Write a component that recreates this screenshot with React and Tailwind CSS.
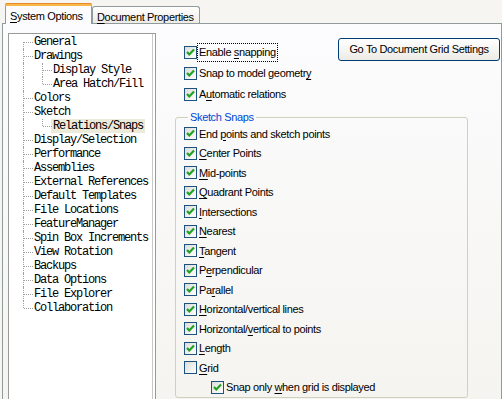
import React from 'react';

const treeItems = [
    { label: 'General', level: 0 },
    { label: 'Drawings', level: 0 },
    { label: 'Display Style', level: 1 },
    { label: 'Area Hatch/Fill', level: 1, lastChild: true },
    { label: 'Colors', level: 0 },
    { label: 'Sketch', level: 0 },
    { label: 'Relations/Snaps', level: 1, lastChild: true, selected: true },
    { label: 'Display/Selection', level: 0 },
    { label: 'Performance', level: 0 },
    { label: 'Assemblies', level: 0 },
    { label: 'External References', level: 0 },
    { label: 'Default Templates', level: 0 },
    { label: 'File Locations', level: 0 },
    { label: 'FeatureManager', level: 0 },
    { label: 'Spin Box Increments', level: 0 },
    { label: 'View Rotation', level: 0 },
    { label: 'Backups', level: 0 },
    { label: 'Data Options', level: 0 },
    { label: 'File Explorer', level: 0 },
    { label: 'Collaboration', level: 0 },
];

const snaps = [
    { label: 'End points and sketch points', u: 4, checked: true },
    { label: 'Center Points', u: 0, checked: true },
    { label: 'Mid-points', u: 0, checked: true },
    { label: 'Quadrant Points', u: 0, checked: true },
    { label: 'Intersections', u: 0, checked: true },
    { label: 'Nearest', u: 0, checked: true },
    { label: 'Tangent', u: 0, checked: true },
    { label: 'Perpendicular', u: 1, checked: true },
    { label: 'Parallel', u: 2, checked: true },
    { label: 'Horizontal/vertical lines', u: 0, checked: true },
    { label: 'Horizontal/vertical to points', u: 11, checked: true },
    { label: 'Length', u: 0, checked: true },
    { label: 'Grid', u: 0, checked: false },
    { label: 'Snap only when grid is displayed', u: 10, checked: true, indent: true },
];

const Mnemonic = ({ text, u }) => (
    <span>
        {text.slice(0, u)}
        <span className="underline underline-offset-[2px]">{text.charAt(u)}</span>
        {text.slice(u + 1)}
    </span>
);

const CheckBox = ({ checked }) => (
    <span className="w-[13px] h-[13px] shrink-0 border border-[#1c5180] bg-gradient-to-br from-[#dcdcd7] to-white flex items-center justify-center">
        {checked && (
            <svg width="11" height="11" viewBox="0 0 11 11">
                <path d="M2 5 L4.3 7.4 L9 2.6" fill="none" stroke="#21a121" strokeWidth="2.2" />
            </svg>
        )}
    </span>
);

const CheckRow = ({ label, u, checked, focused, className = '' }) => (
    <div className={`flex items-center gap-[1px] whitespace-nowrap ${className}`}>
        <CheckBox checked={checked} />
        <span className={focused ? 'outline outline-1 outline-dotted outline-black px-[1px]' : 'px-[1px]'}>
            <Mnemonic text={label} u={u} />
        </span>
    </div>
);

const TreeRow = ({ item, isFirst, isLast }) => {
    const dots = 'border-[#a0a0a0] border-dotted';
    return (
        <div className="flex h-[14px] items-center">
            {/* level 0 gutter */}
            <div className="relative w-[19px] h-full shrink-0">
                <div
                    className={`absolute left-0 border-l ${dots} ${isFirst ? 'top-[7px] bottom-0' : isLast ? 'top-0 h-[7px]' : 'top-0 bottom-0'}`}
                />
                {item.level === 0 && <div className={`absolute left-[1px] top-[7px] w-[9px] border-t ${dots}`} />}
            </div>
            {item.level === 1 && (
                <div className="relative w-[19px] h-full shrink-0">
                    <div className={`absolute left-0 border-l ${dots} ${item.lastChild ? 'top-0 h-[7px]' : 'top-0 bottom-0'}`} />
                    <div className={`absolute left-[1px] top-[7px] w-[9px] border-t ${dots}`} />
                </div>
            )}
            <span
                className={`-ml-[10px] px-[2px] h-[14px] leading-[15px] whitespace-nowrap ${item.selected ? 'bg-[#ecead9]' : ''}`}
            >
                {item.label}
            </span>
        </div>
    );
};

const App = () => {
    return (
        <div
            className="w-[502px] h-[399px] overflow-hidden bg-[#f6f5f1] text-black text-[11px] tracking-[-0.35px] flex flex-col"
            style={{ fontFamily: '"Liberation Sans", Arial, sans-serif' }}
        >
            {/* Tabs */}
            <div className="h-[23px] flex items-end pl-[5px] shrink-0 relative z-10 whitespace-nowrap">
                <div className="w-[87px] h-[21px] -mb-px bg-[#fcfcfe] border-x border-[#919b9c] rounded-t-[3px] flex flex-col">
                    <div className="h-[3px] bg-[#f7b64a] border-t border-[#e68b2c] rounded-t-[2px] -mx-px" />
                    <div className="flex-1 pl-[4px] pt-[2px]">
                        <Mnemonic text="System Options" u={0} />
                    </div>
                </div>
                <div className="w-[108px] h-[17px] bg-gradient-to-b from-white to-[#ecebe6] border border-b-0 border-[#919b9c] rounded-t-[3px] pl-[4px] pt-[2px]">
                    <Mnemonic text="Document Properties" u={0} />
                </div>
            </div>

            {/* Tab page */}
            <div className="ml-[2px] w-[500px] flex-1 border border-[#919b9c] bg-gradient-to-b from-[#fcfcfe] to-[#f4f3ee] flex">
                {/* Tree */}
                <div
                    className="ml-[5px] mt-[9px] w-[148px] h-[420px] shrink-0 bg-white border border-[#9a9a9a] shadow-[inset_-2px_0_0_#fff,inset_-3px_0_0_#c8c8c8] pt-[1px] pl-[14px] text-[12px] tracking-[-1.2px]"
                    style={{ fontFamily: '"Liberation Mono", "Courier New", monospace' }}
                >
                    {treeItems.map((item, i) => (
                        <TreeRow key={i} item={item} isFirst={i === 0} isLast={i === treeItems.length - 1} />
                    ))}
                </div>

                {/* Options */}
                <div className="flex-1 pl-[19px] flex flex-col">
                    <div className="flex">
                        <div className="pt-[18px] pl-[9px] flex flex-col">
                            <CheckRow label="Enable snapping" u={7} checked focused className="h-[21px]" />
                            <CheckRow label="Snap to model geometry" u={21} checked className="h-[21px]" />
                            <CheckRow label="Automatic relations" u={1} checked className="h-[21px]" />
                        </div>
                        <div className="ml-auto pt-[14px] mr-[1px]">
                            <button className="w-[162px] h-[23px] border border-[#003c74] rounded-[3px] bg-gradient-to-b from-white to-[#ecebe6] text-[11px] tracking-[-0.35px] flex items-center justify-center whitespace-nowrap">
                                Go To Document Grid Settings
                            </button>
                        </div>
                    </div>

                    <fieldset className="mt-[6px] w-[293px] border border-[#d0d0bf] rounded-[3px] pl-[8px]">
                        <legend className="ml-[4px] px-[2px] leading-[13px] text-[#0046d5]">Sketch Snaps</legend>
                        {snaps.map((s, i) => (
                            <CheckRow
                                key={i}
                                label={s.label}
                                u={s.u}
                                checked={s.checked}
                                className={`h-[19.5px] ${s.indent ? 'pl-[27px]' : ''}`}
                            />
                        ))}
                    </fieldset>
                </div>
            </div>
        </div>
    );
};

export default App;
